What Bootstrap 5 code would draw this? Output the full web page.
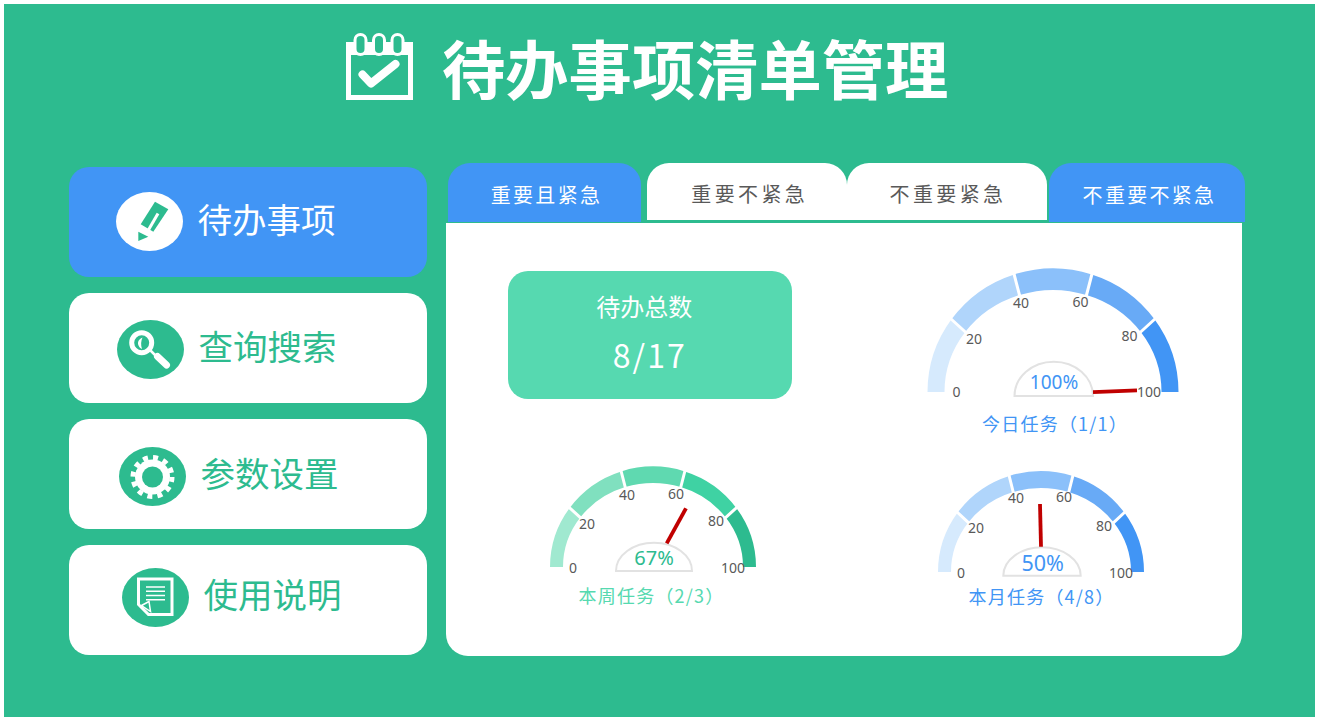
<!DOCTYPE html>
<html lang="zh-CN">
<head>
<meta charset="utf-8">
<title>待办事项清单管理</title>
<link href="https://cdn.jsdelivr.net/npm/bootstrap@5.3.0/dist/css/bootstrap.min.css" rel="stylesheet">
<style>
:root{--g:#2dbb8f;--b:#4195f5;--m:#56d9b0}
html,body{height:100%;overflow:hidden;background:#fff}
body{padding:4px 2px 0 4px;font-family:"Noto Sans CJK SC","Noto Sans",sans-serif}
.panel{height:713px;background:var(--g);overflow:hidden}
.head{height:159px;padding:29px 0 0 342px;gap:29px;color:#fff}
.head h1{font-size:63.3px;font-weight:700;line-height:74px;margin:-3px 0 0 0}
.ico-cal{width:67px;height:67px;flex:none}
.side{width:358.500px;margin:4px 19px 0 64.500px;gap:16px}
.side-btn{height:110px;border-radius:20px;background:#fff;color:var(--g);font-size:34.5px;line-height:1;gap:14.500px;padding:0}
.side-btn span{margin-bottom:7px}
.side-btn:hover,.side-btn:focus{color:var(--g)}
.side-btn.is-on,.side-btn.is-on:hover{background:var(--b);color:#fff}
.pl-a{padding-left:47.5px;padding-bottom:1px}
.pl-b{padding-left:48.5px;padding-top:3px}
.pl-b span{margin-bottom:9px}
.pl-c{padding-left:50.5px;padding-top:4px}
.pl-d{padding-left:53.5px;padding-bottom:6px}
.side-ico{width:67px;height:59px;flex:none}
.main-col{width:796px}
.tabs{margin:0 -3px 0 2px;height:60px;flex-wrap:nowrap}
.tabs .nav-link{display:flex;align-items:center;justify-content:center;padding:4px 0 0 0;border-radius:22px 22px 0 0;font-size:20px;letter-spacing:3.4px;height:57px;background:#fff;color:#595959}
.tabs .nav-link.tab-blue{height:59px;background:var(--b);color:#fff;letter-spacing:2.3px}
.t1{width:193px;margin-right:5.5px}
.t1 .nav-link{padding-left:4px}
.t2{width:200.5px}
.t2 .nav-link{padding-left:6px}
.t3{width:200px;margin-right:2px}
.t3 .nav-link{padding-left:2px}
.t4{width:196px}
.t4 .nav-link{padding-left:5px}
.sheet{height:433px;border:0;border-radius:0 0 22px 22px;background:#fff}
.col-l{width:404px}
.stat{width:283.5px;height:128px;margin:48px 0 0 62px;padding-bottom:5px;border-radius:20px;background:var(--m);color:#fff}
.stat-a{font-size:24px;line-height:34px;margin-left:-11px}
.stat-b{font-size:32px;line-height:44px;letter-spacing:2px;margin-top:9px}
.gauge-a{display:block;margin:39px 0 0 62.5px}
.gauge-b{display:block;margin:63px 0 0 87px}
.gauge-c{display:block;margin:25px 0 0 71px}
.tk{font:14px "Noto Sans",sans-serif;fill:#595959;text-anchor:middle;dominant-baseline:central;transform:translateY(-1px)}
.val{font-family:"Noto Sans",sans-serif;text-anchor:middle;dominant-baseline:central}
.val-a{font-size:19px}
.val-b{font-size:20px}
.val-c{font-size:21.5px}
.cap{font:18px "Noto Sans CJK SC",sans-serif;letter-spacing:1.2px;text-anchor:middle;dominant-baseline:central}
.dome{fill:#fff;stroke:#e2e2e2;stroke-width:2}
.ndl{stroke:#c00000;stroke-width:3.8;fill:none}
.sep{stroke:#fff;stroke-width:3}
.f-b{fill:var(--b)}
.f-g{fill:var(--g)}
.f-m{fill:var(--m)}
</style>
</head>
<body>
<div class="panel">
  <header class="head d-flex align-items-start">
    <svg class="ico-cal" viewBox="0 0 67 67">
      <rect x="2.5" y="11.5" width="62" height="53" fill="none" stroke="#fff" stroke-width="5"/>
      <rect x="2" y="9" width="63" height="13" fill="#fff"/>
      <g fill="#2dbb8f" stroke="#fff" stroke-width="3">
        <rect x="9" y="1.5" width="11" height="20" rx="5.5"/>
        <rect x="27.5" y="1.5" width="11" height="20" rx="5.5"/>
        <rect x="46" y="1.5" width="11" height="20" rx="5.5"/>
      </g>
      <path d="M16.500 41.500L25 50.500 49.500 31" fill="none" stroke="#fff" stroke-width="8" stroke-linecap="round" stroke-linejoin="round"/>
    </svg>
    <h1>待办事项清单管理</h1>
  </header>
  <div class="d-flex align-items-start">
    <nav class="side nav flex-column">
      <a class="side-btn is-on pl-a nav-link d-flex align-items-center" href="#">
        <svg class="side-ico" viewBox="0 0 67 59"><ellipse cx="33.500" cy="29.500" rx="33.500" ry="29.500" fill="#fff"/><path class="f-g" d="M39 9.700L52.300 17.300 37.300 39.700 24.700 32.300Z"/><path fill="#fff" d="M40.700 20.700L43.300 22.300 33 40 30.400 38.400Z"/><path class="f-g" d="M22.300 39.700L32.300 44.700 22.300 49Z"/></svg>
        <span>待办事项</span>
      </a>
      <a class="side-btn pl-b nav-link d-flex align-items-center" href="#">
        <svg class="side-ico" viewBox="0 0 67 59"><ellipse cx="33.500" cy="29.500" rx="33.500" ry="29.500" class="f-g"/><circle cx="24.700" cy="22.700" r="10" fill="none" stroke="#fff" stroke-width="5"/><path d="M25.500 17.500Q20.500 19.500 21 24 22 28 25 29 23 23 25.500 17.500Z" fill="#fff"/><path d="M33.500 30.500L39 36" stroke="#fff" stroke-width="2.500"/><path d="M40.500 36.500L49.500 45" stroke="#fff" stroke-width="7" stroke-linecap="round"/></svg>
        <span>查询搜索</span>
      </a>
      <a class="side-btn pl-c nav-link d-flex align-items-center" href="#">
        <svg class="side-ico" viewBox="0 0 67 59"><ellipse cx="33.500" cy="29.500" rx="33.500" ry="29.500" class="f-g"/><circle cx="33.500" cy="30" r="17.500" fill="#fff"/><circle cx="33.500" cy="30" r="19.500" fill="none" stroke="#fff" stroke-width="5" stroke-dasharray="5 5.210"/><circle cx="33.500" cy="30" r="10.500" class="f-g"/></svg>
        <span>参数设置</span>
      </a>
      <a class="side-btn pl-d nav-link d-flex align-items-center" href="#">
        <svg class="side-ico" viewBox="0 0 67 59"><ellipse cx="33.500" cy="29.500" rx="33.500" ry="29.500" class="f-g"/><path d="M16.500 11H50V46.500H26.500L16.500 36.500Z" fill="none" stroke="#fff" stroke-width="3"/><path d="M19.500 37.500L27 33.500 28.500 43.500Z" fill="none" stroke="#fff" stroke-width="1.500"/><path d="M24 19H43M24 23.300H43M24 27.500H43M24 31.700H43" stroke="#fff" stroke-width="1.500"/></svg>
        <span>使用说明</span>
      </a>
    </nav>
    <main class="main-col">
      <ul class="tabs nav">
        <li class="nav-item t1"><a class="nav-link tab-blue" href="#">重要且紧急</a></li>
        <li class="nav-item t2"><a class="nav-link" href="#">重要不紧急</a></li>
        <li class="nav-item t3"><a class="nav-link" href="#">不重要紧急</a></li>
        <li class="nav-item t4"><a class="nav-link tab-blue" href="#">不重要不紧急</a></li>
      </ul>
      <div class="sheet card d-flex flex-row">
        <div class="col-l">
          <div class="stat d-flex flex-column align-items-center justify-content-center">
            <div class="stat-a">待办总数</div>
            <div class="stat-b">8/17</div>
          </div>
          <svg class="gauge-b" width="240" height="150" viewBox="-120 -105 240 150">
            <path fill="#a0e9d0" d="M-103 0A103 100.500 0 0 1-83.300-59.100L-72.800-49.400A90 84 0 0 0-90 0Z"/>
            <path fill="#80e0bf" d="M-83.300-59.100A103 100.500 0 0 1-31.800-95.600L-27.800-79.900A90 84 0 0 0-72.800-49.400Z"/>
            <path fill="#5fd9b0" d="M-31.800-95.600A103 100.500 0 0 1 31.800-95.600L27.800-79.900A90 84 0 0 0-27.800-79.900Z"/>
            <path fill="#3fd2a3" d="M31.800-95.600A103 100.500 0 0 1 83.300-59.100L72.800-49.400A90 84 0 0 0 27.800-79.900Z"/>
            <path fill="#2dbb8f" d="M83.300-59.100A103 100.500 0 0 1 103 0H90A90 84 0 0 0 72.800-49.400Z"/>
            <path class="sep" d="M-84.500-60.200L-71.500-48.300M-32.300-97.500L-27.300-78M32.300-97.500L27.300-78M84.500-60.200L71.500-48.300"/>
            <text class="tk" x="-80" y="1">0</text><text class="tk" x="-66" y="-43">20</text><text class="tk" x="-26" y="-72">40</text><text class="tk" x="23" y="-73">60</text><text class="tk" x="63" y="-46">80</text><text class="tk" x="80" y="1">100</text>
            <path class="dome" d="M-37 4A38 28.300 0 0 1 39 4Z"/>
            <path class="ndl" d="M13.700-23.700L33-58.700"/>
            <text class="val val-b f-g" x="1" y="-10">67%</text>
            <text class="cap f-m" x="-1.500" y="27.700">本周任务（2/3）</text>
          </svg>
        </div>
        <div class="col-r">
          <svg class="gauge-a" width="280" height="180" viewBox="-140 -130 280 180">
            <path fill="#d6eafd" d="M-125.500 0A125.500 123.700 0 0 1-101.500-72.700L-87.800-60A108.500 102 0 0 0-108.500 0Z"/>
            <path fill="#b0d5fb" d="M-101.500-72.700A125.500 123.700 0 0 1-38.800-117.600L-33.500-97A108.500 102 0 0 0-87.800-60Z"/>
            <path fill="#8bc0fa" d="M-38.800-117.600A125.500 123.700 0 0 1 38.800-117.600L33.500-97A108.500 102 0 0 0-33.500-97Z"/>
            <path fill="#68aaf6" d="M38.800-117.600A125.500 123.700 0 0 1 101.500-72.700L87.800-60A108.500 102 0 0 0 33.500-97Z"/>
            <path fill="#4195f5" d="M101.500-72.700A125.500 123.700 0 0 1 125.500 0H108.500A108.500 102 0 0 0 87.800-60Z"/>
            <path class="sep" d="M-103-74L-86-58.500M-39.500-120L-33-95M39.500-120L33-95M103-74L86-58.500"/>
            <text class="tk" x="-96.500" y="0">0</text><text class="tk" x="-79" y="-53">20</text><text class="tk" x="-32" y="-89">40</text><text class="tk" x="27.500" y="-90">60</text><text class="tk" x="76.500" y="-56">80</text><text class="tk" x="96" y="0">100</text>
            <path class="dome" d="M-38.500 4A39.250 34.300 0 0 1 40 4Z"/>
            <path class="ndl" d="M40 0.200L84-1.700"/>
            <text class="val val-a f-b" x="1" y="-10">100%</text>
            <text class="cap f-b" x="2" y="31">今日任务（1/1）</text>
          </svg>
          <svg class="gauge-c" width="240" height="150" viewBox="-120 -105 240 150">
            <path fill="#d6eafd" d="M-103 0A103 101 0 0 1-83.300-59.400L-72.800-49.400A90 84 0 0 0-90 0Z"/>
            <path fill="#b0d5fb" d="M-83.300-59.400A103 101 0 0 1-31.800-96L-27.800-79.900A90 84 0 0 0-72.800-49.400Z"/>
            <path fill="#8bc0fa" d="M-31.800-96A103 101 0 0 1 31.800-96L27.800-79.900A90 84 0 0 0-27.800-79.900Z"/>
            <path fill="#68aaf6" d="M31.800-96A103 101 0 0 1 83.300-59.400L72.800-49.400A90 84 0 0 0 27.800-79.900Z"/>
            <path fill="#4195f5" d="M83.300-59.400A103 101 0 0 1 103 0H90A90 84 0 0 0 72.800-49.400Z"/>
            <path class="sep" d="M-84.500-60.500L-71.500-48.300M-32.300-98L-27.300-78M32.300-98L27.300-78M84.500-60.500L71.500-48.300"/>
            <text class="tk" x="-80" y="1">0</text><text class="tk" x="-65" y="-44">20</text><text class="tk" x="-25" y="-74">40</text><text class="tk" x="23" y="-75">60</text><text class="tk" x="63" y="-46">80</text><text class="tk" x="80" y="1">100</text>
            <path class="dome" d="M-37.700 3.700A38.700 28.400 0 0 1 39.700 3.700Z"/>
            <path class="ndl" d="M0-25.300L-1-68"/>
            <text class="val val-c f-b" x="1.700" y="-9.700">50%</text>
            <text class="cap f-b" x="0.500" y="23.700">本月任务（4/8）</text>
          </svg>
        </div>
      </div>
    </main>
  </div>
</div>
<script src="https://cdn.jsdelivr.net/npm/bootstrap@5.3.0/dist/js/bootstrap.bundle.min.js"></script>
</body>
</html>
